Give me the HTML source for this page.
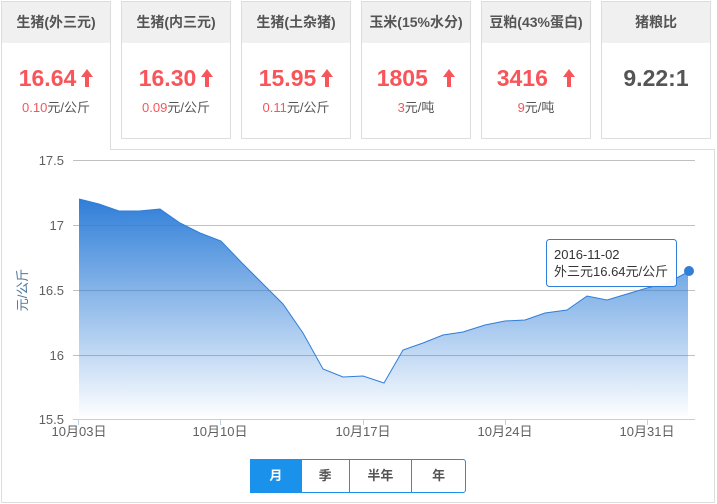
<!DOCTYPE html>
<html><head><meta charset="utf-8"><style>
*{margin:0;padding:0;box-sizing:border-box}
body{width:717px;height:504px;background:#fff;font-family:"Liberation Sans","Noto Sans CJK SC",sans-serif;position:relative;overflow:hidden}
.card{position:absolute;top:1px;width:110px;height:138px;border:1px solid #ddd;background:#fff;text-align:center}
.card .h{height:41px;background:#f0f0f0;line-height:41px;font-size:14px;font-weight:bold;color:#555}
.card .v{margin-top:22px;font-size:23px;font-weight:bold;color:#f8555a;height:26px;line-height:26px}
.card .v svg{margin-left:5px;vertical-align:-1px}
.card .s{margin-top:6px;font-size:13px;color:#555}
.card .s i{font-style:normal;color:#f8555a}
.panel{position:absolute;left:1px;top:149px;width:714px;height:354px;border:1px solid #ddd}
.btns{position:absolute;left:250px;top:459px;height:34px;width:216px;border:1px solid #1a91eb;border-radius:0 3px 3px 0;display:flex;font-size:13px;font-weight:bold;color:#555}
.btns div{line-height:32px;text-align:center;border-left:1px solid #1a91eb}
</style></head><body>
<div class="panel"></div>
<div class="card" style="left:1px;height:149px;border-bottom:none;z-index:2"><div class="h">生猪(外三元)</div><div class="v">16.64<svg width="12" height="18" viewBox="0 0 12 18"><path d="M6,0 L12,8 L8,8 L8,18 L4,18 L4,8 L0,8Z" fill="#f8555a"/></svg></div><div class="s"><i>0.10</i>元/公斤</div></div>
<div class="card" style="left:121px"><div class="h">生猪(内三元)</div><div class="v">16.30<svg width="12" height="18" viewBox="0 0 12 18"><path d="M6,0 L12,8 L8,8 L8,18 L4,18 L4,8 L0,8Z" fill="#f8555a"/></svg></div><div class="s"><i>0.09</i>元/公斤</div></div>
<div class="card" style="left:241px"><div class="h">生猪(土杂猪)</div><div class="v">15.95<svg width="12" height="18" viewBox="0 0 12 18"><path d="M6,0 L12,8 L8,8 L8,18 L4,18 L4,8 L0,8Z" fill="#f8555a"/></svg></div><div class="s"><i>0.11</i>元/公斤</div></div>
<div class="card" style="left:361px"><div class="h">玉米(15%水分)</div><div class="v">1805 <svg width="12" height="18" viewBox="0 0 12 18" style="margin-left:9px"><path d="M6,0 L12,8 L8,8 L8,18 L4,18 L4,8 L0,8Z" fill="#f8555a"/></svg></div><div class="s"><i>3</i>元/吨</div></div>
<div class="card" style="left:481px"><div class="h">豆粕(43%蛋白)</div><div class="v">3416 <svg width="12" height="18" viewBox="0 0 12 18" style="margin-left:9px"><path d="M6,0 L12,8 L8,8 L8,18 L4,18 L4,8 L0,8Z" fill="#f8555a"/></svg></div><div class="s"><i>9</i>元/吨</div></div>
<div class="card" style="left:601px"><div class="h">猪粮比</div><div class="v" style="color:#555">9.22:1</div></div>
<svg style="position:absolute;left:0;top:0" width="717" height="504">
<defs><linearGradient id="g" x1="0" y1="0" x2="0" y2="1"><stop offset="0" stop-color="#2f7ed8"/><stop offset="1" stop-color="#2f7ed8" stop-opacity="0"/></linearGradient></defs>
<g stroke="#c0c0c0" stroke-width="1"><line x1="73" y1="160.5" x2="695" y2="160.5"/><line x1="73" y1="225.5" x2="695" y2="225.5"/><line x1="73" y1="290.5" x2="695" y2="290.5"/><line x1="73" y1="355.5" x2="695" y2="355.5"/></g>
<line x1="73" y1="419.5" x2="695" y2="419.5" stroke="#c0d0e0"/>
<g stroke="#c0d0e0"><line x1="78.5" y1="419" x2="78.5" y2="425"/><line x1="220.5" y1="419" x2="220.5" y2="425"/><line x1="363.5" y1="419" x2="363.5" y2="425"/><line x1="505.5" y1="419" x2="505.5" y2="425"/><line x1="647.5" y1="419" x2="647.5" y2="425"/></g>
<path d="M79,199 L99,204 119,211 139,211 160,209 180,223 200,233 221,241 242,263 262,283 283,304 303,333 323,369 343,377 363,376 384,383 403,350 423,343 443,335 463,332 485,325 505,321 525,320 545,313 567,310 587,296 607,300 627,294 647,288 667,283 688,272 L688,419 L79,419Z" fill="url(#g)"/>
<path d="M79,199 L99,204 119,211 139,211 160,209 180,223 200,233 221,241 242,263 262,283 283,304 303,333 323,369 343,377 363,376 384,383 403,350 423,343 443,335 463,332 485,325 505,321 525,320 545,313 567,310 587,296 607,300 627,294 647,288 667,283 688,272" fill="none" stroke="#2f7ed8" stroke-width="1"/>
<circle cx="689" cy="271" r="5" fill="#2f7ed8"/>
<g font-size="13" fill="#606060" text-anchor="end" font-family="Liberation Sans,sans-serif"><text x="64" y="165">17.5</text><text x="64" y="230">17</text><text x="64" y="295">16.5</text><text x="64" y="360">16</text><text x="64" y="424">15.5</text></g>
<g font-size="13" fill="#606060" text-anchor="middle" font-family="Liberation Sans,Noto Sans CJK SC,sans-serif"><text x="79" y="436">10月03日</text><text x="220" y="436">10月10日</text><text x="363" y="436">10月17日</text><text x="505" y="436">10月24日</text><text x="647" y="436">10月31日</text></g>
<text transform="translate(27,290) rotate(-90)" font-size="13" fill="#4d759e" text-anchor="middle" font-family="Liberation Sans,Noto Sans CJK SC,sans-serif">元/公斤</text>
<rect x="546.5" y="239.5" width="130" height="47" rx="3" fill="#fff" fill-opacity="0.95" stroke="#2f7ed8"/>
<text x="554" y="259" font-size="13" fill="#333" font-family="Liberation Sans,sans-serif">2016-11-02</text>
<text x="554" y="276" font-size="13" fill="#333" font-family="Liberation Sans,Noto Sans CJK SC,sans-serif">外三元16.64元/公斤</text>
</svg>
<div class="btns"><div style="width:50px;background:#1a91eb;color:#fff;border-left:none">月</div><div style="width:48px">季</div><div style="width:63px">半年</div><div style="width:54px">年</div></div>
</body></html>
